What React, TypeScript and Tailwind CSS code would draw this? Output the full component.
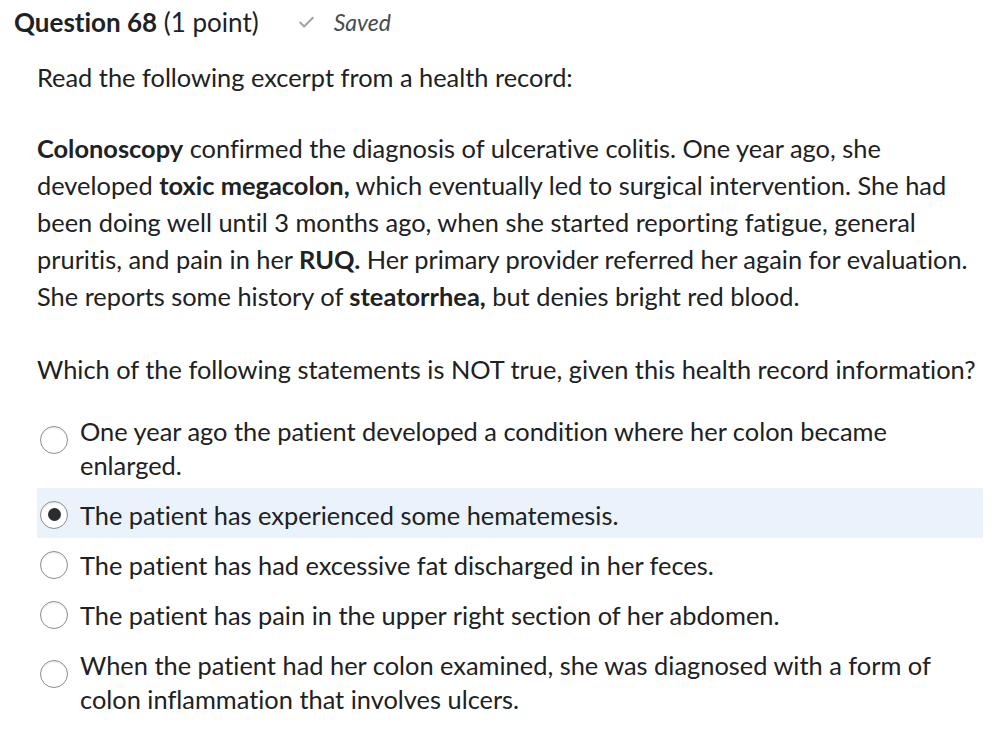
import { Check } from "lucide-react";

type Option = { text: string; selected?: boolean; wraps?: boolean };

const options: Option[] = [
  {
    text: "One year ago the patient developed a condition where her colon became enlarged.",
    wraps: true,
  },
  { text: "The patient has experienced some hematemesis.", selected: true },
  { text: "The patient has had excessive fat discharged in her feces." },
  { text: "The patient has pain in the upper right section of her abdomen." },
  {
    text: "When the patient had her colon examined, she was diagnosed with a form of colon inflammation that involves ulcers.",
    wraps: true,
  },
];

function Radio({ checked, low }: { checked?: boolean; low?: boolean }) {
  return (
    <span
      className={`flex h-[28px] w-[28px] shrink-0 items-center justify-center rounded-full border border-[#8a8c8e] bg-white shadow-[inset_0_2px_0_rgba(0,0,0,0.05)] ${
        low ? "mt-[12px]" : "mt-[3px]"
      }`}
    >
      {checked && <span className="h-[13px] w-[13px] rounded-full bg-[#2a2c2e]" />}
    </span>
  );
}

export default function App() {
  return (
    <div className="min-h-[733px] bg-white font-['Lato','Liberation_Sans',sans-serif] text-[#202122] [font-variant-ligatures:none]">
      <div className="flex items-center pl-[14px] pt-[5px]">
        <h2 className="text-[26px] leading-[34px]">
          <span className="font-bold">Question 68</span> (1 point)
        </h2>
        <Check className="ml-[38px] h-[19px] w-[19px] text-[#a0a3a5]" strokeWidth={2.5} />
        <span className="ml-[18px] text-[23px] italic text-[#494c4e]">Saved</span>
      </div>

      <div className="pl-[37px] pr-[17px] text-[25.4px] leading-[37px]">
        <p className="mt-[19px]">Read the following excerpt from a health record:</p>

        <p className="mt-[34px]">
          <b>Colonoscopy</b> confirmed the diagnosis of ulcerative colitis. One year ago, she
          developed <b>toxic megacolon,</b> which eventually led to surgical intervention. She had
          been doing well until 3 months ago, when she started reporting fatigue, general
          pruritis, and pain in her <b>RUQ.</b> Her primary provider referred her again for
          evaluation. She reports some history of <b>steatorrhea,</b> but denies bright red blood.
        </p>

        <p className="mt-[36px]">
          Which of the following statements is NOT true, given this health record information?
        </p>

        <div className="mt-[16px] flex flex-col">
          {options.map((o) => (
            <div
              key={o.text}
              className={`flex items-start gap-[12px] pb-[6px] pl-[3px] pr-[40px] pt-[10px] leading-[34px] ${
                o.selected ? "bg-[#eaf2fb]" : ""
              }`}
            >
              <Radio checked={o.selected} low={o.wraps} />
              <span>{o.text}</span>
            </div>
          ))}
        </div>
      </div>
    </div>
  );
}
